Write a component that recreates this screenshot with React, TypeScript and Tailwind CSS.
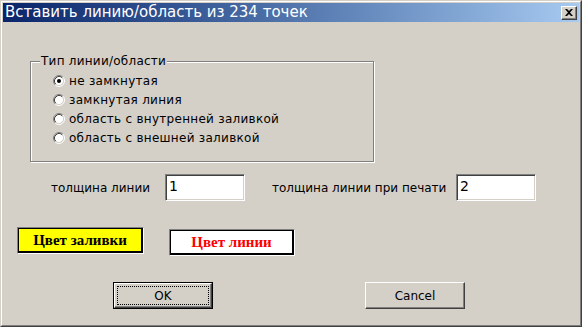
import React from "react";

function Radio({ checked }: { checked?: boolean }) {
  return (
    <svg width="12" height="12" viewBox="0 0 12 12" className="shrink-0">
      <circle cx="6" cy="6" r="4.5" fill="#ffffff" />
      <path d="M2.11 9.89 A5.5 5.5 0 0 1 9.89 2.11" fill="none" stroke="#808080" strokeWidth="1" />
      <path d="M9.89 2.11 A5.5 5.5 0 0 1 2.11 9.89" fill="none" stroke="#ffffff" strokeWidth="1" />
      <path d="M2.82 9.18 A4.5 4.5 0 0 1 9.18 2.82" fill="none" stroke="#404040" strokeWidth="1" />
      <path d="M9.18 2.82 A4.5 4.5 0 0 1 2.82 9.18" fill="none" stroke="#D4D0C8" strokeWidth="1" />
      {checked && <circle cx="6" cy="6" r="2" fill="#000000" />}
    </svg>
  );
}

function RadioRow({ label, checked }: { label: string; checked?: boolean }) {
  return (
    <div className="flex items-center h-[19px] gap-[4px]">
      <Radio checked={checked} />
      <span className="leading-none tracking-[0.28px]">{label}</span>
    </div>
  );
}

function Field({ value }: { value: string }) {
  return (
    <div className="w-[80px] h-[27px] bg-white border border-t-[#808080] border-l-[#808080] border-r-white border-b-white shadow-[inset_1px_1px_0_#404040,inset_-1px_-1px_0_#D4D0C8] pl-[3px] pt-[3px] text-[14px] leading-[16px] text-black">
      {value}
    </div>
  );
}

export default function App() {
  return (
    <div className="w-[582px] h-[327px] bg-[#D4D0C8] border border-t-[#D4D0C8] border-l-[#D4D0C8] border-r-[#404040] border-b-[#404040] font-['DejaVu_Sans','Liberation_Sans',sans-serif] text-[12px] text-black overflow-hidden">
      <div className="h-full border border-t-white border-l-white border-r-[#808080] border-b-[#808080] p-[1px] flex flex-col">
        {/* Title bar */}
        <div className="h-[19px] flex items-center justify-between bg-gradient-to-r from-[#0A246A] to-[#A6CAF0] pl-[2px] pr-[2px]">
          <span className="text-white text-[15px] leading-none whitespace-nowrap">
            Вставить линию/область из 234 точек
          </span>
          <div className="w-[16px] h-[14px] bg-[#D4D0C8] border border-t-white border-l-white border-r-[#404040] border-b-[#404040] shadow-[inset_-1px_-1px_0_#808080] flex items-center justify-center">
            <svg width="8" height="7" viewBox="0 0 8 7">
              <path d="M0 0 L2 0 L4 2 L6 0 L8 0 L5 3.5 L8 7 L6 7 L4 5 L2 7 L0 7 L3 3.5 Z" fill="#000" />
            </svg>
          </div>
        </div>

        {/* Group box */}
        <div className="relative mt-[39px] ml-[27px] w-[344px] h-[101px] border border-[#808080] shadow-[inset_1px_1px_0_white,1px_1px_0_white]">
          <span className="absolute left-[9px] top-[-8px] px-[1px] bg-[#D4D0C8] leading-[14px] tracking-[0.25px]">
            Тип линии/области
          </span>
          <div className="flex flex-col pt-[9px] pl-[22px]">
            <RadioRow label="не замкнутая" checked />
            <RadioRow label="замкнутая линия" />
            <RadioRow label="область с внутренней заливкой" />
            <RadioRow label="область с внешней заливкой" />
          </div>
        </div>

        {/* Line widths */}
        <div className="flex items-center mt-[12px] ml-[48px] h-[27px]">
          <span className="w-[114px] whitespace-nowrap">толщина линии</span>
          <Field value="1" />
          <span className="ml-[27px] w-[184px] whitespace-nowrap">толщина линии при печати</span>
          <Field value="2" />
        </div>

        {/* Colour buttons */}
        <div className="flex items-start mt-[26px] ml-[14px]">
          <div className="w-[127px] h-[27px] border border-t-[#808080] border-l-[#808080] border-r-white border-b-white">
            <div className="w-full h-full bg-[#FFFF00] border-t border-l border-b-2 border-r-2 border-black flex items-center justify-center font-['Liberation_Serif',serif] font-bold text-[15px] leading-none text-black">
              Цвет заливки
            </div>
          </div>
          <div className="ml-[25px] mt-[2px] w-[126px] h-[27px] border border-t-[#808080] border-l-[#808080] border-r-white border-b-white">
            <div className="w-full h-full bg-white border-t border-l border-b-2 border-r-2 border-black flex items-center justify-center font-['Liberation_Serif',serif] font-bold text-[15px] leading-none text-[#FF0000]">
              Цвет линии
            </div>
          </div>
        </div>

        {/* OK / Cancel */}
        <div className="flex mt-[26px] ml-[110px]">
          <div className="w-[100px] h-[27px] border border-black">
            <div className="w-full h-full border border-t-white border-l-white border-r-[#404040] border-b-[#404040] shadow-[inset_-1px_-1px_0_#808080] p-[2px]">
              <div className="w-full h-full border border-dotted border-black flex items-center justify-center leading-none">
                OK
              </div>
            </div>
          </div>
          <div className="ml-[152px] w-[100px] h-[27px] border border-t-white border-l-white border-r-[#404040] border-b-[#404040] shadow-[inset_-1px_-1px_0_#808080] flex items-center justify-center leading-none">
            Cancel
          </div>
        </div>
      </div>
    </div>
  );
}
